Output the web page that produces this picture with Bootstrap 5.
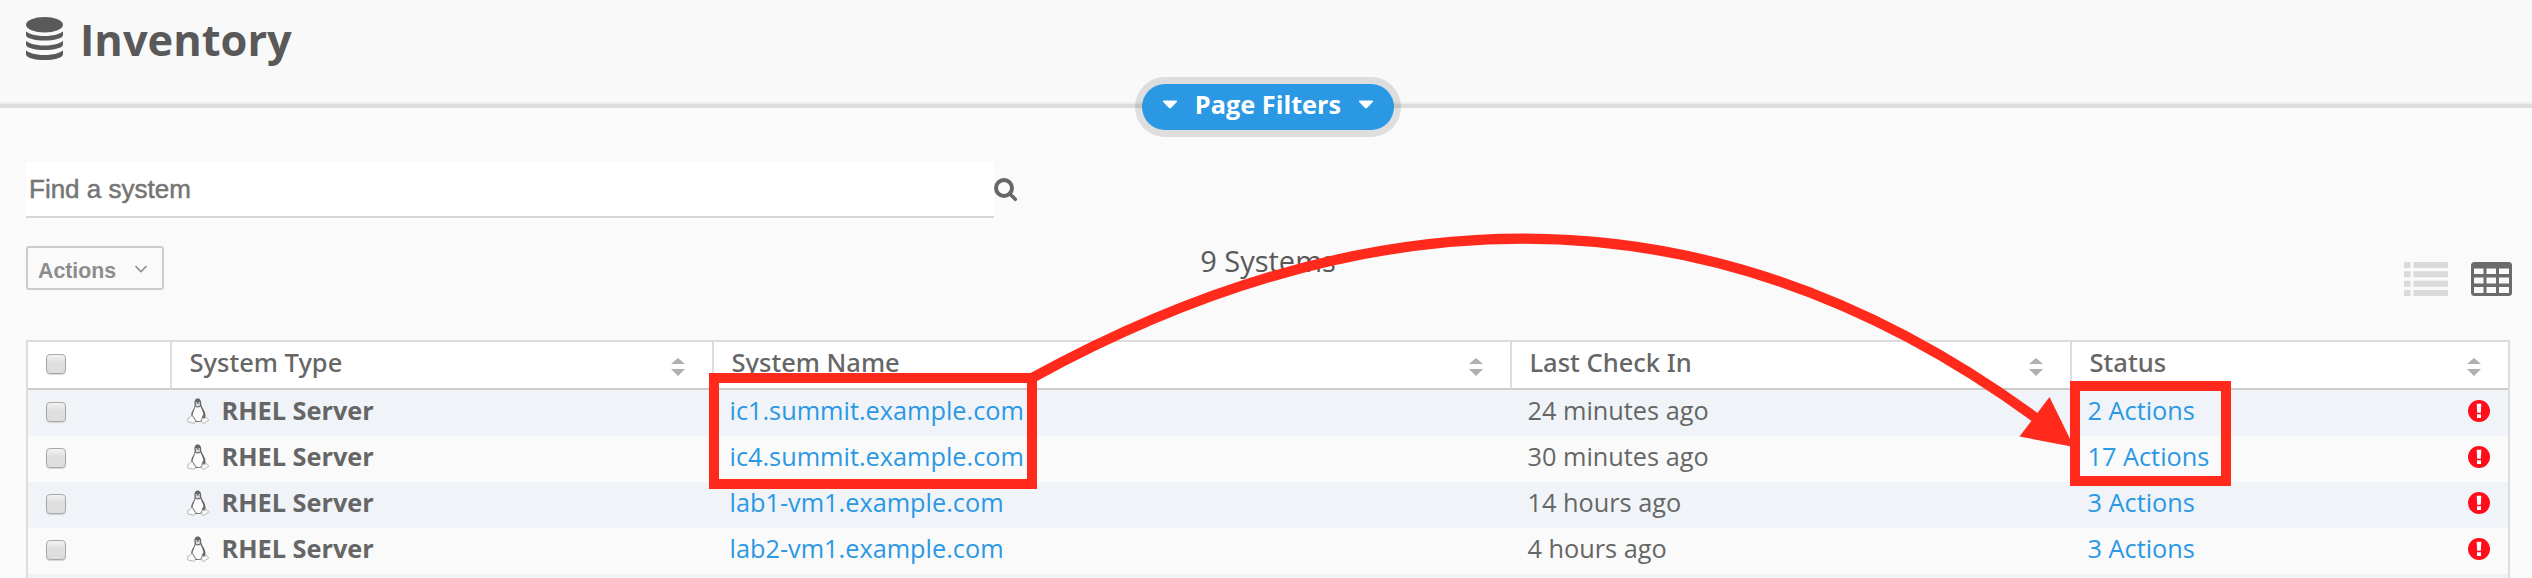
<!DOCTYPE html>
<html lang="en">
<head>
<meta charset="utf-8">
<meta name="viewport" content="width=device-width, initial-scale=1">
<title>Inventory</title>
<link href="https://cdn.jsdelivr.net/npm/bootstrap@5.3.0/dist/css/bootstrap.min.css" rel="stylesheet">
<style>
  body { background: #fafafa; color: #666; font: 400 25.3px/40px "Open Sans", "Noto Sans", sans-serif; height: 578px; overflow: hidden; }
  a { color: #2b98e4; }
  svg { display: block; flex: none; }
  .page-head { height: 108px; padding: 0 26px; background: #f9f9f9; border-bottom: 4px solid #ddd; box-shadow: inset 0 -2px #eee; }
  .page-head h1 { font-size: 43.4px; line-height: 60px; font-weight: 700; color: #595959; margin-left: 17px; padding-top: 10px; }
  .page-head svg { margin-top: 17px; }
  .filter-row { height: 54px; }
  .btn-filters { --bs-btn-bg: #2b98e4; --bs-btn-border-color: #2b98e4; --bs-btn-color: #fff; --bs-btn-hover-bg: #1f86ce; --bs-btn-hover-color: #fff;
    width: 252px; height: 46px; margin-top: -24px; border: 0; border-radius: 23px; padding: 0 20px 5px; font: 700 25.3px/41px "Open Sans", sans-serif; box-shadow: 0 0 0 7px rgba(0,0,0,.11); }
  .search-field { width: 968px; height: 56px; border: 0; border-bottom: 2px solid #d6d6d6; border-radius: 0; background: #fff; padding: 0 3px; font: 400 26px "Liberation Sans", sans-serif; }
  .search-field::placeholder { color: #757575; opacity: 1; -webkit-text-stroke: .5px #757575; }
  .main { padding: 0 22px 0 26px; }
  .toolbar { height: 122px; padding-top: 28px; }
  .btn-menu { width: 138px; height: 44px; border: 2px solid #ccc; border-radius: 3px; color: #8b8d8d; font: 700 21.3px/24px "Liberation Sans", sans-serif; padding: 5px 15px 0 10px; }
  .total { font-size: 29px; line-height: 40px; color: #595959; margin-top: -5px; }
  .views { gap: 23px; padding-top: 16px; margin-right: -2px; padding-left: 2px; }
  .inv { width: 2484px; margin: 0; table-layout: fixed; border-collapse: separate; border-spacing: 0; border: solid #ddd; border-width: 2px 2px 0; --bs-table-bg: transparent; }
  .inv > :not(caption) > * > * { height: 46px; padding: 0 0 6px 17.5px; border: 0; background: #fafafa; box-shadow: none; color: #666; vertical-align: top; }
  .inv > tbody > tr:nth-child(odd) > * { background: #f0f4f8; }
  .inv > tbody > tr:last-child > * { height: 4px; padding: 0; }
  .inv > thead > tr > * { height: 48px; background: #fff; font-family: "Noto Sans", sans-serif; font-size: 25.5px; font-weight: 500; border-bottom: 2px solid #ccc; padding-right: 27px; }
  .inv > thead > tr > * + * { border-left: 2px solid #ddd; padding-left: 17.5px; }
  .inv > * > tr > :first-child { padding-left: 18px; }
  .sorter { margin-top: 16px; }
  .tick { display: block; appearance: none; width: 20px; height: 20px; margin: 12px 0 0; border: 1.5px solid #a8a8a8; border-radius: 4px; background: linear-gradient(#f2f2f2, #dedede 45%, #dedede); box-shadow: 0 1px 1px rgba(0,0,0,.15); }
  .tux { margin: 8px 13px 0 -1px; }
  .alert-dot { margin: 10px 18px 0 0; }
  .callouts { left: 0; top: 0; pointer-events: none; }
</style>
</head>
<body class="position-relative">
<svg width="0" height="0" class="position-absolute">
  <symbol id="sort" viewBox="0 0 14 18"><path d="M0 6 7 0l7 6zM0 11h14l-7 7z" fill="#b0b0b0"/></symbol>
  <symbol id="tux" viewBox="0 0 22 26">
    <path d="M7.500 6C7 2.500 8.500.5 10.700.5s3.800 2 3.500 5.500c.2 3.500 4 6 4.300 11 .1 1.500-.3 3-1 3.500L13 24H8l-3.500-4.500c-1-3 .3-6 2-8.500C7.500 9.500 7.700 8 7.500 6z" fill="#666"/>
    <path d="M8.500 8.500c1.500 1.500 3.500 1.200 5 0 .8 2.500 3 5.500 2.900 8.500-1.200.5-1.700 2-1.800 4.500-1.500 2.300-4 2.300-6 .8-.5-2-1.700-3.500-3.100-5 .3-3.300 2.400-6 3-8.800z" fill="#fcfcfc"/>
    <path d="M8.600 6.900c.8-1.700 3.500-1.700 4.600-.2-.5 1.800-3.900 2.200-4.600.2z" fill="#ddd"/>
    <circle cx="9.300" cy="4.900" r=".8" fill="#ddd"/><circle cx="12.300" cy="4.900" r=".8" fill="#ddd"/>
    <path d="M1 20c1.300.2 1.800-.2 2.800-1.800.8-.8 1.700-.2 2.300.8l2.200 3.600c.4 1.600-.6 2.700-2.300 2.500L1 24c-.9-.4-.1-2.300 0-4zM15.500 19c.1 1.700 2.600 1.900 3.700.2l2.300 2.500c.3.700-.2.900-1.500 1.400l-2.500 2c-1.600.8-3-.1-2.800-2z" fill="#fbfbfb" stroke="#999" stroke-width=".7"/>
  </symbol>
  <symbol id="bang" viewBox="0 0 22 22"><circle cx="11" cy="11" r="11" fill="#ff0d1b"/><path d="M8.700 3.700h4.600l-.5 9H9.200zM9 14.300h4v3.700H9z" fill="#fff"/></symbol>
</svg>

<header class="page-head d-flex align-items-start">
  <svg width="37" height="43" viewBox="0 0 37 43" fill="#595959"><ellipse cx="18.500" cy="7.700" rx="18.500" ry="7.700"/><path d="M0 14.500c8 6 29 6 37 0V18c0 7.300-37 7.300-37 0zM0 24c8 6 29 6 37 0v3.500c0 7.300-37 7.300-37 0zM0 33.500c8 6 29 6 37 0V37c0 8-37 8-37 0z"/></svg>
  <h1 class="mb-0">Inventory</h1>
</header>
<div class="filter-row d-flex justify-content-center">
  <button class="btn btn-filters d-flex align-items-center justify-content-between ms-1">
    <svg width="16" height="9" viewBox="0 0 16 9" fill="#fff"><path d="M1.800.5h12.400q1.500.3.600 1.500L9 7.900q-1 .8-2 0L1.200 2q-.9-1.200.6-1.500z"/></svg>
    Page Filters
    <svg width="16" height="9" viewBox="0 0 16 9" fill="#fff"><path d="M1.800.5h12.400q1.500.3.600 1.500L9 7.900q-1 .8-2 0L1.200 2q-.9-1.200.6-1.500z"/></svg>
  </button>
</div>

<main class="main">
  <div class="d-flex align-items-center">
    <input class="form-control search-field" type="text" placeholder="Find a system" aria-label="Find a system">
    <svg width="24" height="24" viewBox="0 0 24 24" fill="none" stroke="#666" stroke-linecap="round"><circle cx="10" cy="10" r="8" stroke-width="4"/><path d="m16 16 5.300 5.300" stroke-width="3.600"/></svg>
  </div>
  <div class="toolbar row g-0 align-items-start">
    <div class="col">
      <button class="btn btn-menu d-flex align-items-center justify-content-between">Actions
        <svg width="12" height="8" viewBox="0 0 12 8" fill="none" stroke="#8b8d8d" stroke-width="1.600" class="mb-1"><path d="m.5 1 5.500 5.700L11.500 1"/></svg>
      </button>
    </div>
    <div class="col-auto total">9 Systems</div>
    <div class="col d-flex justify-content-end views">
      <svg width="44" height="34" viewBox="0 0 44 34" fill="#dadada"><path d="M0 0h6.500v6H0zM9.500 0H44v6H9.500zM0 9.300h6.500v6H0zM9.500 9.300H44v6H9.500zM0 18.700h6.500v6H0zM9.500 18.700H44v6H9.500zM0 28h6.500v6H0zM9.500 28H44v6H9.500z"/></svg>
      <svg width="41" height="34" viewBox="0 0 41 34"><rect width="41" height="34" rx="3.500" fill="#6b6b6b"/><path d="M3 6.500h9.500V12H3zM15.500 6.500H25V12h-9.500zM28 6.500h10V12H28zM3 15.500h9.500v6H3zM15.500 15.500H25v6h-9.500zM28 15.500h10v6H28zM3 25h9.500v6H3zM15.500 25H25v6h-9.500zM28 25h10v6H28z" fill="#fafafa"/></svg>
    </div>
  </div>

  <table class="table inv">
    <colgroup><col style="width:142px"><col style="width:542px"><col style="width:798px"><col style="width:560px"><col style="width:438px"></colgroup>
    <thead>
      <tr>
        <th><input type="checkbox" class="tick" aria-label="Select all"></th>
        <th><div class="d-flex justify-content-between">System Type<svg class="sorter" width="14" height="18"><use href="#sort"/></svg></div></th>
        <th><div class="d-flex justify-content-between">System Name<svg class="sorter" width="14" height="18"><use href="#sort"/></svg></div></th>
        <th><div class="d-flex justify-content-between">Last Check In<svg class="sorter" width="14" height="18"><use href="#sort"/></svg></div></th>
        <th><div class="d-flex justify-content-between">Status<svg class="sorter" width="14" height="18"><use href="#sort"/></svg></div></th>
      </tr>
    </thead>
    <tbody>
      <tr>
        <td><input type="checkbox" class="tick" aria-label="Select"></td>
        <td><div class="d-flex fw-bold"><svg class="tux" width="22" height="26"><use href="#tux"/></svg>RHEL Server</div></td>
        <td><a class="text-decoration-none" href="#">ic1.summit.example.com</a></td>
        <td>24 minutes ago</td>
        <td><div class="d-flex justify-content-between"><a class="text-decoration-none" href="#">2 Actions</a><svg class="alert-dot" width="22" height="22"><use href="#bang"/></svg></div></td>
      </tr>
      <tr>
        <td><input type="checkbox" class="tick" aria-label="Select"></td>
        <td><div class="d-flex fw-bold"><svg class="tux" width="22" height="26"><use href="#tux"/></svg>RHEL Server</div></td>
        <td><a class="text-decoration-none" href="#">ic4.summit.example.com</a></td>
        <td>30 minutes ago</td>
        <td><div class="d-flex justify-content-between"><a class="text-decoration-none" href="#">17 Actions</a><svg class="alert-dot" width="22" height="22"><use href="#bang"/></svg></div></td>
      </tr>
      <tr>
        <td><input type="checkbox" class="tick" aria-label="Select"></td>
        <td><div class="d-flex fw-bold"><svg class="tux" width="22" height="26"><use href="#tux"/></svg>RHEL Server</div></td>
        <td><a class="text-decoration-none" href="#">lab1-vm1.example.com</a></td>
        <td>14 hours ago</td>
        <td><div class="d-flex justify-content-between"><a class="text-decoration-none" href="#">3 Actions</a><svg class="alert-dot" width="22" height="22"><use href="#bang"/></svg></div></td>
      </tr>
      <tr>
        <td><input type="checkbox" class="tick" aria-label="Select"></td>
        <td><div class="d-flex fw-bold"><svg class="tux" width="22" height="26"><use href="#tux"/></svg>RHEL Server</div></td>
        <td><a class="text-decoration-none" href="#">lab2-vm1.example.com</a></td>
        <td>4 hours ago</td>
        <td><div class="d-flex justify-content-between"><a class="text-decoration-none" href="#">3 Actions</a><svg class="alert-dot" width="22" height="22"><use href="#bang"/></svg></div></td>
      </tr>
      <tr><td></td><td></td><td></td><td></td><td></td></tr>
    </tbody>
  </table>
</main>

<!-- Callouts: two frames and the arrow that joins them -->
<svg class="callouts position-absolute" width="2532" height="578" viewBox="0 0 2532 578" fill="none" stroke="#ff2a1c" stroke-width="10">
  <rect x="714" y="378" width="318" height="106"/>
  <rect x="2075" y="386" width="151" height="95"/>
  <path d="M1032 378Q1575.400 80.400 2036 418"/>
  <path d="m2049.500 397 24.500 50-54.500-10.500z" fill="#ff2a1c" stroke="none"/>
</svg>
<script src="https://cdn.jsdelivr.net/npm/bootstrap@5.3.0/dist/js/bootstrap.bundle.min.js"></script>
</body>
</html>
